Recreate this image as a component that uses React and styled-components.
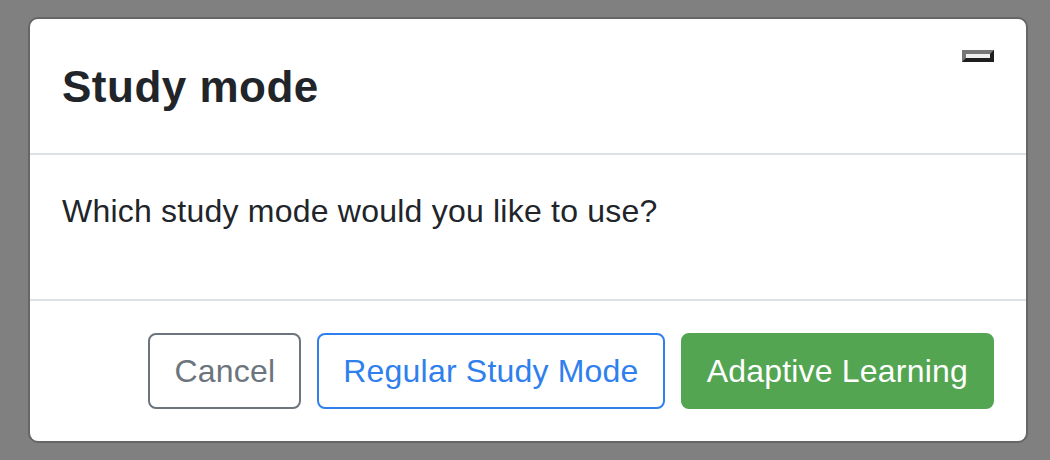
import React from "react";
import styled, { createGlobalStyle, css } from "styled-components";

const GlobalStyle = createGlobalStyle`
  html, body {
    margin: 0;
    padding: 0;
    background: #808080;
    font-family: "Liberation Sans", Arial, sans-serif;
    color: #212529;
  }
  * { box-sizing: border-box; }
`;

const Backdrop = styled.div`
  width: 1050px;
  height: 460px;
  padding: 17px 0 0 28px;
`;

const Modal = styled.div`
  width: 1000px;
  background: #fff;
  border: 2px solid #666666;
  border-radius: 10px;
  overflow: hidden;
`;

const Header = styled.div`
  display: flex;
  align-items: flex-start;
  justify-content: space-between;
  padding: 32px;
  border-bottom: 2px solid #dee2e6;
`;

const Title = styled.h5`
  margin: 0;
  padding-top: 2px;
  font-size: 44px;
  font-weight: 700;
  line-height: 68px;
  letter-spacing: 0.5px;
  color: #212529;
`;

const CloseButton = styled.button`
  width: 32px;
  height: 12px;
  padding: 0;
  margin: -1px 0 0 0;
  background: #efefef;
  border-width: 4px;
  border-style: solid;
  border-color: #767676 #1e1e1e #1e1e1e #767676;
`;

const Body = styled.div`
  padding: 32px;
  border-bottom: 2px solid #dee2e6;
`;

const Text = styled.p`
  margin: 0 0 32px;
  font-size: 32px;
  line-height: 48px;
  letter-spacing: 0.22px;
`;

const Footer = styled.div`
  display: flex;
  justify-content: flex-end;
  align-items: center;
  padding: 24px;
`;

const variants = {
  secondary: css`
    color: #6c757d;
    background: #fff;
    border-color: #6c757d;
  `,
  primary: css`
    color: #2f80ed;
    background: #fff;
    border-color: #2f80ed;
  `,
  success: css`
    color: #fff;
    background: #53a552;
    border-color: #53a552;
  `,
};

const Button = styled.button`
  margin: 8px;
  padding: 12px 24px;
  font-family: inherit;
  font-size: 32px;
  line-height: 48px;
  font-weight: 400;
  letter-spacing: 0.2px;
  border: 2px solid transparent;
  border-radius: 8px;
  cursor: pointer;
  ${(p) => variants[p.$variant]}
`;

export default function App() {
  return (
    <>
      <GlobalStyle />
      <Backdrop>
        <Modal role="dialog">
          <Header>
            <Title>Study mode</Title>
            <CloseButton aria-label="Close" />
          </Header>
          <Body>
            <Text>Which study mode would you like to use?</Text>
          </Body>
          <Footer>
            <Button $variant="secondary">Cancel</Button>
            <Button $variant="primary">Regular Study Mode</Button>
            <Button $variant="success">Adaptive Learning</Button>
          </Footer>
        </Modal>
      </Backdrop>
    </>
  );
}
